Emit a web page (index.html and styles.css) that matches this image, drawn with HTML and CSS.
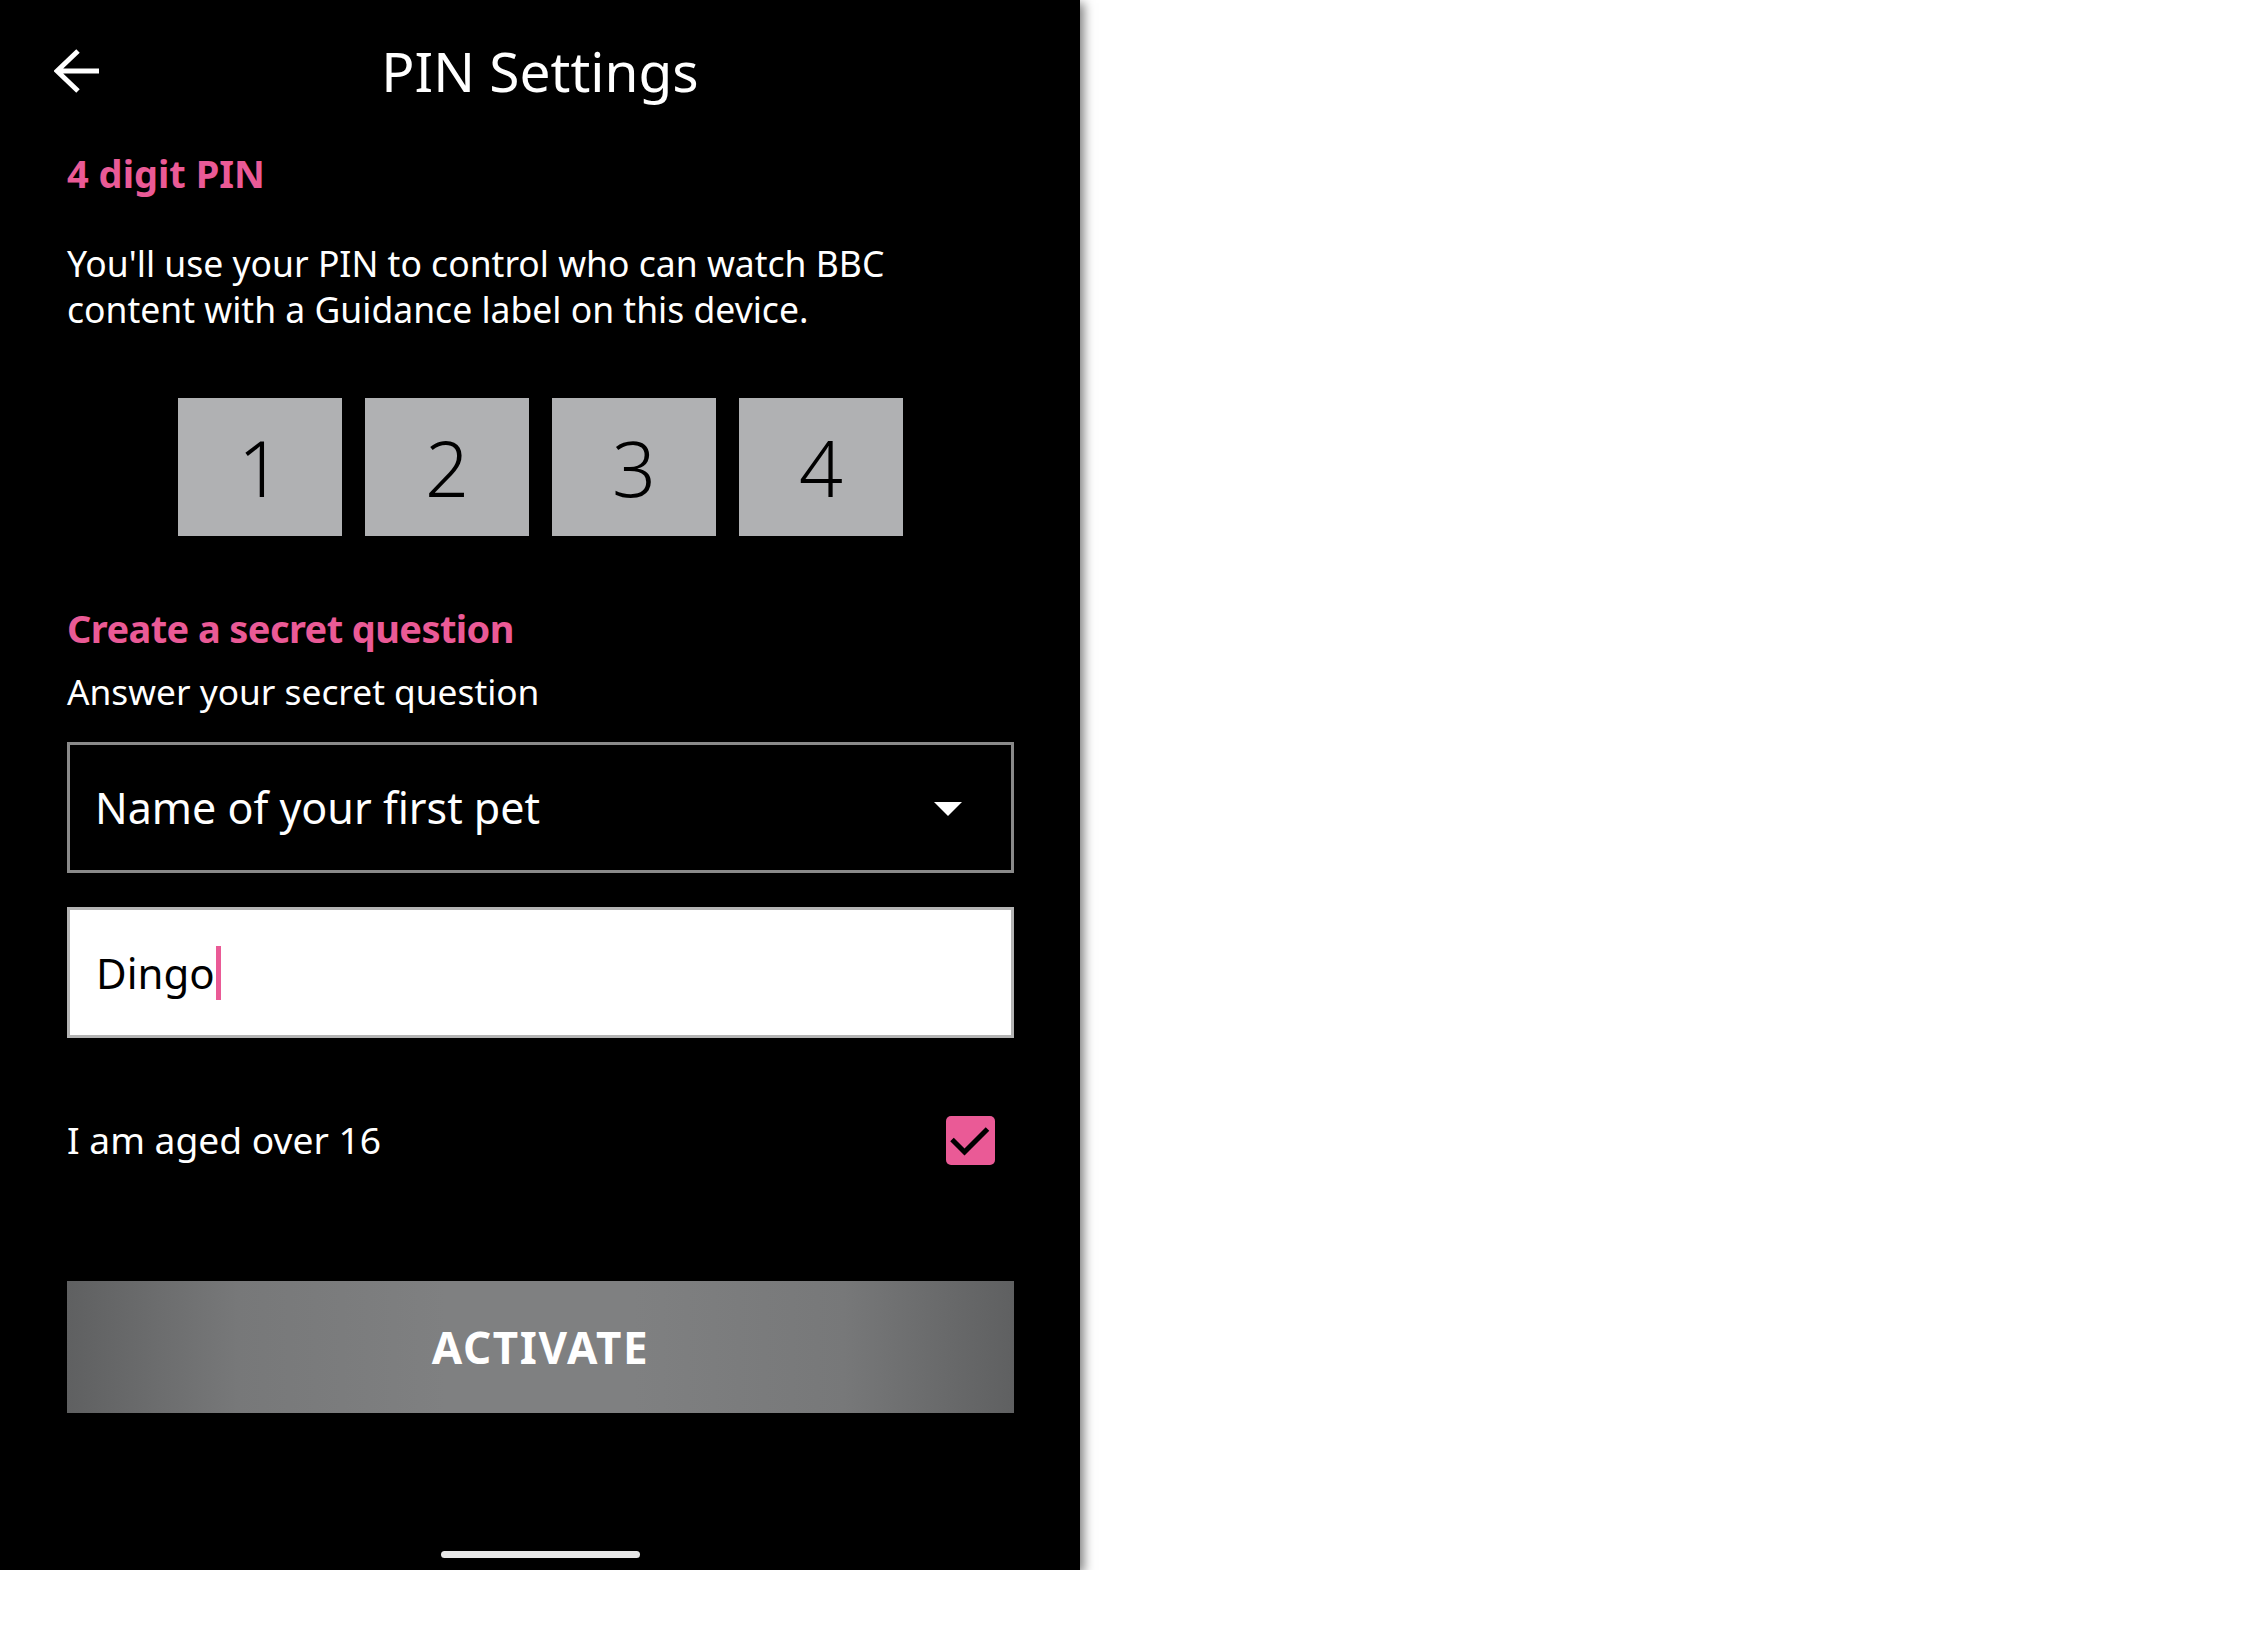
FILE: index.html
```html
<!DOCTYPE html>
<html lang="en">
<head>
<meta charset="utf-8">
<title>PIN Settings</title>
<link rel="stylesheet" href="styles.css">
</head>
<body>
<div class="phone">
  <header class="topbar">
    <div class="back">
      <svg width="46" height="44" viewBox="0 0 46 44" aria-hidden="true">
        <path d="M24 2 L3 22 L24 42 M3 22 L45 22" fill="none" stroke="#fff" stroke-width="5"/>
      </svg>
    </div>
    <h1 class="title">PIN Settings</h1>
    <div></div>
  </header>
  <main class="content">
    <h2 class="section-title pin-title">4 digit PIN</h2>
    <p class="intro">You'll use your PIN to control who can watch BBC content with a Guidance label on this device.</p>
    <div class="pin-row">
      <div class="pin-box">1</div>
      <div class="pin-box">2</div>
      <div class="pin-box">3</div>
      <div class="pin-box">4</div>
    </div>
    <h2 class="section-title question-title">Create a secret question</h2>
    <p class="hint">Answer your secret question</p>
    <div class="select">
      <span class="select-text">Name of your first pet</span>
      <svg class="caret-down" width="28" height="14" viewBox="0 0 28 14" aria-hidden="true">
        <path d="M0 0 L28 0 L14 14 Z" fill="#fff"/>
      </svg>
    </div>
    <div class="answer">
      <span class="answer-text">Dingo</span><span class="cursor"></span>
    </div>
    <div class="age-row">
      <span class="age-label">I am aged over 16</span>
      <span class="checkbox">
        <svg width="49" height="49" viewBox="0 0 49 49" aria-hidden="true">
          <path d="M6 23.5 L18.5 36 L41.5 13" fill="none" stroke="#000" stroke-width="5"/>
        </svg>
      </span>
    </div>
    <div class="activate">ACTIVATE</div>
  </main>
  <div class="home-bar"></div>
</div>
</body>
</html>
```
FILE: styles.css
```css
html, body {
  margin: 0;
  padding: 0;
  background: #ffffff;
}

body {
  font-family: "Noto Sans", "Open Sans", "DejaVu Sans", sans-serif;
}

.phone {
  width: 1080px;
  height: 1570px;
  background: #000;
  color: #fff;
  box-shadow: 4px 3px 10px rgba(0, 0, 0, 0.5);
  display: flex;
  flex-direction: column;
}

.topbar {
  display: grid;
  grid-template-columns: 1fr auto 1fr;
  align-items: center;
  padding-top: 36px;
  height: 70px;
}

.back {
  padding-left: 54px;
  display: flex;
  align-items: center;
}

.back svg {
  display: block;
}

.title {
  margin: 0;
  font-size: 55px;
  line-height: 70px;
  font-weight: 400;
}

.content {
  padding: 0 66px 0 67px;
  display: flex;
  flex-direction: column;
}

.section-title {
  margin: 0;
  color: #ea5a96;
  font-size: 38px;
  line-height: 50px;
  font-weight: 700;
}

.pin-title {
  margin-top: 42px;
}

.intro {
  margin: 42px 0 0;
  font-size: 35.5px;
  line-height: 46px;
  max-width: 900px;
}

.pin-row {
  margin-top: 66px;
  display: flex;
  justify-content: center;
  gap: 23px;
}

.pin-box {
  width: 164px;
  height: 138px;
  background: #b0b1b3;
  color: #000;
  font-size: 77px;
  font-weight: 300;
  display: flex;
  align-items: center;
  justify-content: center;
  line-height: 1;
}

.question-title {
  margin-top: 67px;
  letter-spacing: -0.6px;
}

.hint {
  margin: 15px 0 0;
  font-size: 35.3px;
  line-height: 46px;
}

.select {
  margin-top: 28px;
  box-sizing: border-box;
  height: 131px;
  border: 3px solid #8a8a8a;
  padding: 0 49px 0 25px;
  display: flex;
  align-items: center;
  justify-content: space-between;
}

.select-text {
  font-size: 43px;
  line-height: 1;
}

.answer-text {
  font-size: 42px;
  line-height: 1;
}

.caret-down {
  display: block;
  margin-top: 2px;
}

.answer {
  margin-top: 34px;
  box-sizing: border-box;
  height: 131px;
  border: 3px solid #b4b4b4;
  background: #fff;
  color: #000;
  padding: 0 26px;
  display: flex;
  align-items: center;
}

.cursor {
  display: inline-block;
  width: 5px;
  height: 54px;
  background: #ea5a96;
  margin-left: 1px;
}

.age-row {
  margin-top: 77px;
  height: 50px;
  display: flex;
  align-items: center;
  justify-content: space-between;
  padding-right: 19px;
}

.age-label {
  font-size: 37.2px;
  line-height: 50px;
}

.checkbox {
  width: 49px;
  height: 49px;
  border-radius: 5px;
  background: #ea5a96;
  display: block;
}

.checkbox svg {
  display: block;
}

.activate {
  margin-top: 116px;
  height: 132px;
  display: flex;
  align-items: center;
  justify-content: center;
  font-size: 44px;
  font-weight: 700;
  letter-spacing: 1.6px;
  color: #fff;
  background: linear-gradient(to right, #5f6061 0%, #777879 18%, #7f8081 40%, #7f8081 60%, #777879 82%, #5f6061 100%);
}

.home-bar {
  margin: 138px auto 0;
  width: 199px;
  height: 7px;
  border-radius: 4px;
  background: #e8e8e8;
}
```
